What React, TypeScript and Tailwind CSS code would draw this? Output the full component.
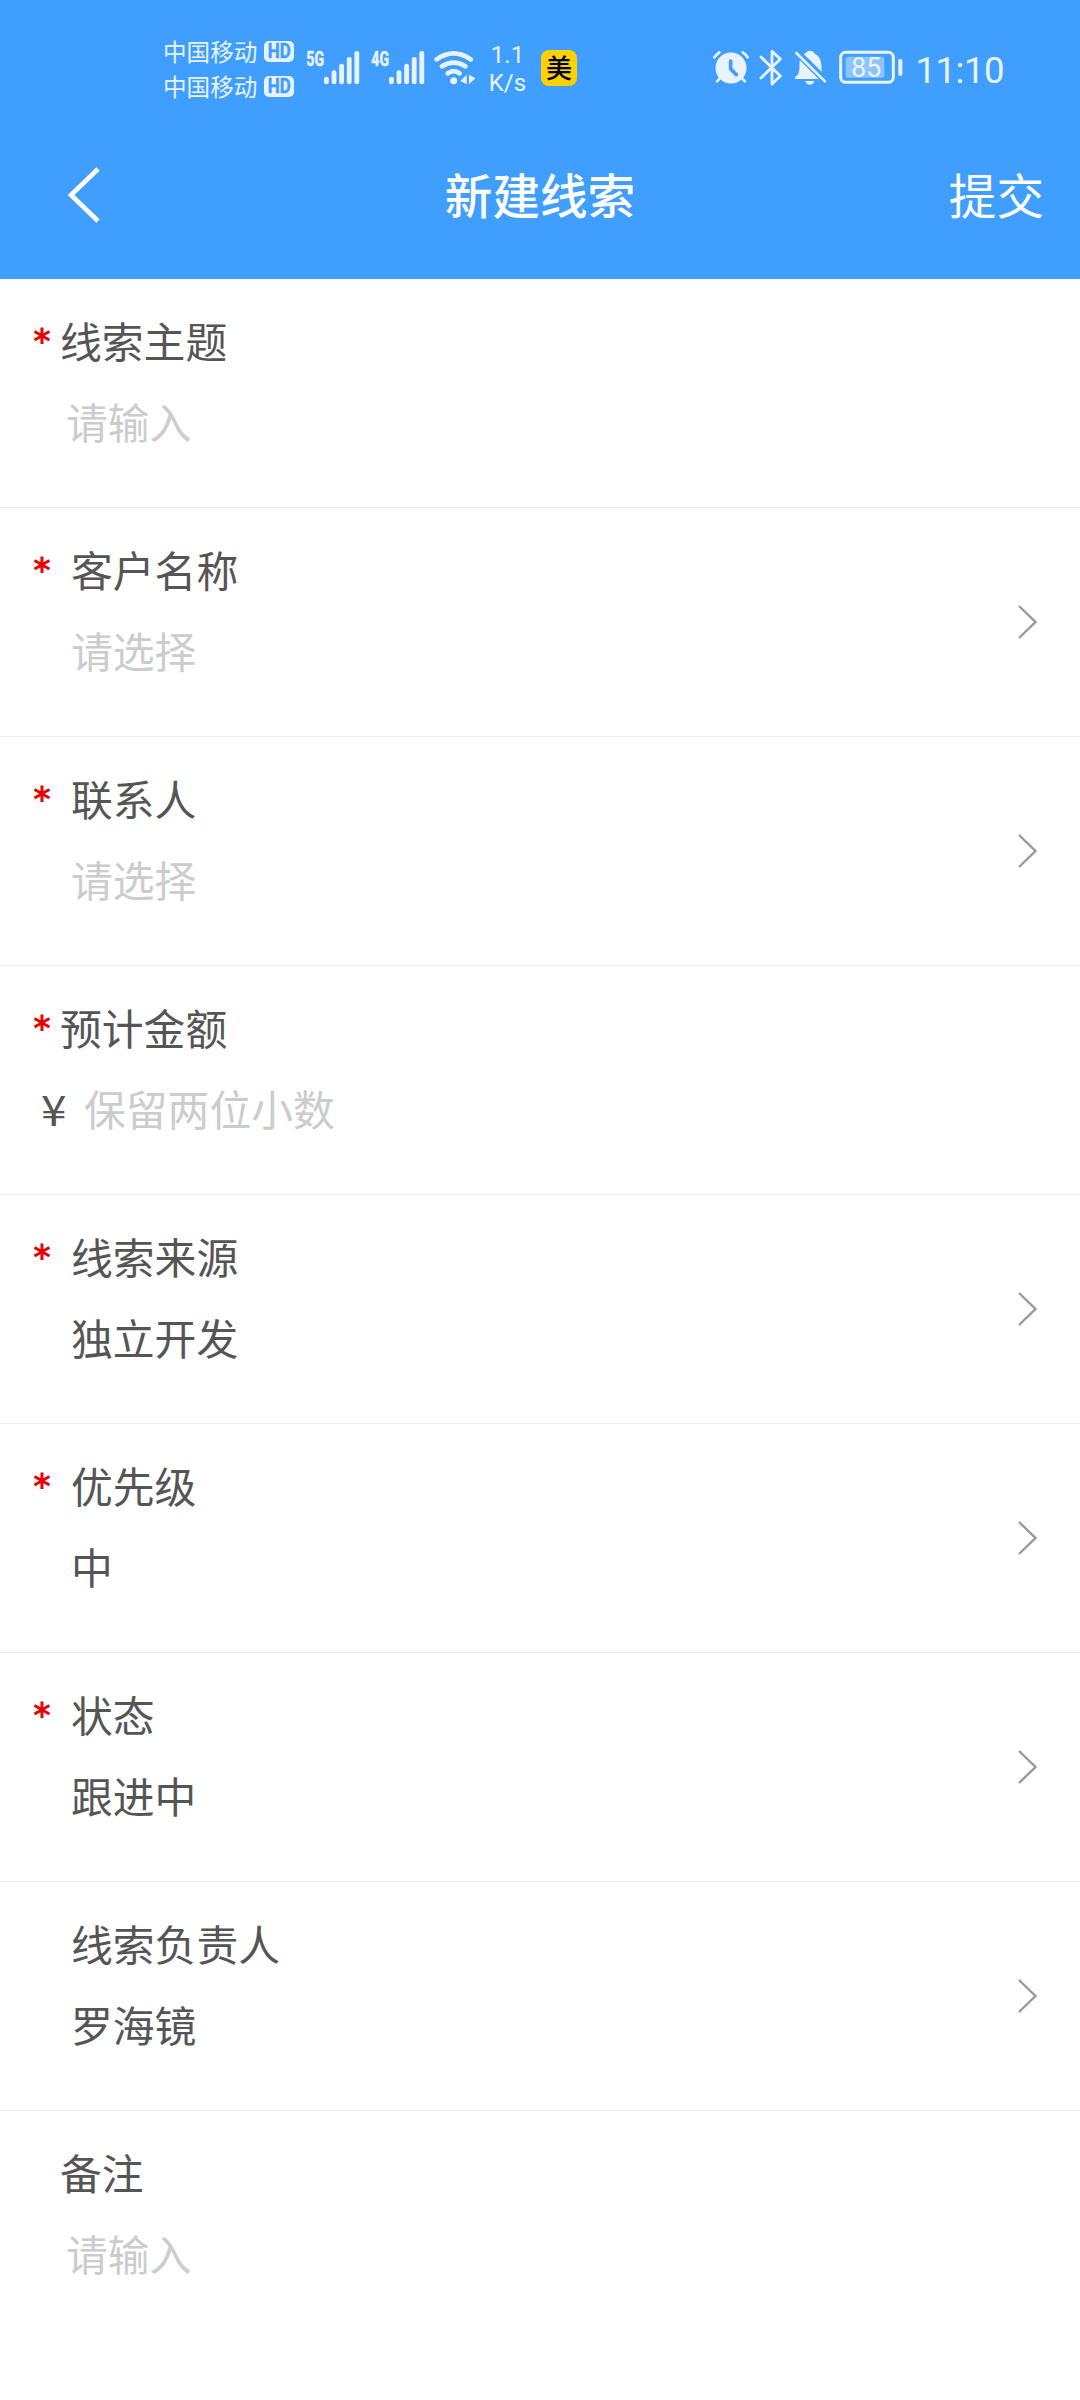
import React from "react";

type Row = {
  label: string;
  value: string;
  required?: boolean;
  select?: boolean;
  filled?: boolean;
  currency?: boolean;
};

const rows: Row[] = [
  { label: "线索主题", value: "请输入", required: true },
  { label: "客户名称", value: "请选择", required: true, select: true },
  { label: "联系人", value: "请选择", required: true, select: true },
  { label: "预计金额", value: "保留两位小数", required: true, currency: true },
  { label: "线索来源", value: "独立开发", required: true, select: true, filled: true },
  { label: "优先级", value: "中", required: true, select: true, filled: true },
  { label: "状态", value: "跟进中", required: true, select: true, filled: true },
  { label: "线索负责人", value: "罗海镜", select: true, filled: true },
  { label: "备注", value: "请输入" },
];

function Carrier() {
  return (
    <div className="flex h-[21px] items-center">
      <span className="w-[101px] text-[23.6px] leading-[21px] whitespace-nowrap">中国移动</span>
      <svg width="30" height="21" viewBox="0 0 30 21">
        <rect width="30" height="21" rx="5" fill="#e8f3ff" />
        <text x="3.800" y="17.400" textLength="23" lengthAdjust="spacingAndGlyphs" fontFamily="Roboto, sans-serif" fontWeight="700" fontSize="19.500" fill="#409eff" stroke="#409eff" strokeWidth="0.5">HD</text>
      </svg>
    </div>
  );
}

function Signal({ label }: { label: string }) {
  const tops = [155, 136, 116, 96, 78];
  return (
    <svg width="54" height="44" viewBox="468 63 162 132" className="shrink-0">
      <text x="469" y="122" textLength="53" lengthAdjust="spacingAndGlyphs" fontFamily="Roboto, sans-serif" fontWeight="700" fontSize="59" fill="#e8f3ff" stroke="#e8f3ff" strokeWidth="1.5">{label}</text>
      {tops.map((t, i) => (
        <rect key={t} x={522 + i * 22.8} y={t} width="14.5" height={178 - t} rx="7" fill="#e8f3ff" />
      ))}
    </svg>
  );
}

function Wifi() {
  return (
    <svg width="42" height="36" viewBox="192 75 126 108" className="shrink-0" fill="none" stroke="#e8f3ff" strokeWidth="14" strokeLinecap="round">
      <path d="M200 103Q251 67 302 103" />
      <path d="M216 124Q251 102 286 124" />
      <path d="M233 145Q251 132 269 145" />
      <circle cx="251" cy="167" r="10.5" fill="#e8f3ff" stroke="none" />
      <path d="M290 149V178L271 168ZM297 149L316 160L297 178Z" fill="#e8f3ff" stroke="none" />
    </svg>
  );
}

function Alarm() {
  return (
    <svg width="36" height="36" viewBox="38 64 108 108" className="shrink-0" fill="none" strokeLinecap="round">
      <circle cx="92" cy="118" r="46.5" fill="#e8f3ff" />
      <path d="M42 86Q49 77 57 71M127 71Q136 77 142 86M50 158L62 146M122 146L134 158" stroke="#e8f3ff" strokeWidth="8" />
      <path d="M91 97V121L108 138" stroke="#409eff" strokeWidth="11" strokeLinejoin="round" />
    </svg>
  );
}

function Bluetooth() {
  return (
    <svg width="24" height="38" viewBox="178 60 72 114" className="shrink-0" fill="none" stroke="#e8f3ff" strokeWidth="8.5" strokeLinecap="round" strokeLinejoin="round">
      <path d="M184 84L242 141L217 165V67L242 90L184 147" />
    </svg>
  );
}

function MutedBell() {
  return (
    <svg width="33" height="36" viewBox="283 64 99 108" className="shrink-0" fill="#e8f3ff">
      <path d="M300 94L357 151H286V145C296 139 299 132 299 118Z" />
      <path d="M312 76C319 75 321 66 331 66C341 66 342 73 348 77C362 86 366 98 366 129Z" />
      <path d="M317 157H344Q341 168 331 168Q320 168 317 157Z" />
      <path d="M290 73L376 158" stroke="#e8f3ff" strokeWidth="7.5" strokeLinecap="round" />
    </svg>
  );
}

function Battery() {
  return (
    <svg width="64" height="36" viewBox="416 64 192 108" className="shrink-0">
      <rect x="421" y="71" width="158" height="90" rx="15" fill="none" stroke="#e8f3ff" strokeWidth="9" />
      <rect x="436" y="84" width="116" height="63" rx="8" fill="#8cc4ff" />
      <rect x="594" y="90" width="12" height="52" rx="6" fill="#e8f3ff" />
      <text x="453" y="146" textLength="90" lengthAdjust="spacingAndGlyphs" fontFamily="Roboto, sans-serif" fontSize="81" fill="#e8f3ff">85</text>
    </svg>
  );
}

function StatusBar() {
  return (
    <div className="flex h-[136px] items-center pl-[163px] text-[#e8f3ff]">
      <div className="flex flex-col gap-[14px] pt-[2px]">
        <Carrier />
        <Carrier />
      </div>
      <div className="ml-[12px]"><Signal label="5G" /></div>
      <div className="ml-[10.5px]"><Signal label="4G" /></div>
      <div className="ml-[9.5px]"><Wifi /></div>
      <div className="mr-[12.5px] ml-[10.5px] flex w-[42px] flex-col items-center pt-[2px] font-[Roboto,sans-serif] text-[24px] leading-[28px]">
        <span>1.1</span>
        <span>K/s</span>
      </div>
      <div className="flex h-[36px] w-[36px] items-center justify-center rounded-[8px] bg-[#ffd100] text-[26px] leading-[30px] font-medium text-black">
        <span className="relative -top-px">美</span>
      </div>
      <div className="ml-[136px] flex items-center">
        <Alarm />
        <div className="ml-[10px]"><Bluetooth /></div>
        <div className="ml-[11px]"><MutedBell /></div>
        <div className="ml-[12px]"><Battery /></div>
        <svg width="96" height="48" viewBox="0 0 96 48" className="ml-[12px]">
          <text x="0.500" y="38.500" textLength="89" fontFamily="Roboto, sans-serif" fontSize="36.5" fill="#e8f3ff">11:10</text>
        </svg>
      </div>
    </div>
  );
}

function Field({ row }: { row: Row }) {
  const labelPad = row.select ? "pl-[71px]" : "pl-[60px]";
  const valuePad = row.currency ? "pl-[33px]" : row.select ? "pl-[71px]" : "pl-[66px]";
  return (
    <div className="flex h-[229px] items-center border-b border-[#eee] text-[#555] last:border-b-0">
      <div className="h-full grow pt-[40px]">
        <div className={"relative flex h-[42px] items-center text-[41.8px] leading-[42px] " + labelPad}>
          {row.required && (
            <span className="absolute top-px left-[33.5px] font-['DejaVu_Sans',sans-serif] text-[34px] text-[#e60000] [-webkit-text-stroke:1px_#e60000]">*</span>
          )}
          {row.label}
        </div>
        <div className={"mt-[39px] flex h-[42px] items-center text-[41.8px] leading-[42px] " + valuePad}>
          {row.currency && (
            <span className="flex w-[51px] pl-[8px]">
              <span className="origin-left scale-x-110">¥</span>
            </span>
          )}
          <span className={row.filled ? "" : "text-[#ccc]"}>{row.value}</span>
        </div>
      </div>
      {row.select && (
        <svg width="24" height="36" viewBox="0 0 24 36" className="mr-[40px]" fill="none" stroke="#999" strokeWidth="2.4">
          <path d="M3 2L19.500 18L3 34" />
        </svg>
      )}
    </div>
  );
}

export default function App() {
  return (
    <div className="h-[2400px] w-[1080px] overflow-hidden bg-white font-['Noto_Sans_CJK_SC',sans-serif]">
      <header className="h-[279px] bg-[#409eff]">
        <StatusBar />
        <div className="grid h-[118px] grid-cols-3 items-center text-[47.6px] leading-[48px] text-white">
          <svg width="36" height="56" viewBox="0 0 36 56" className="ml-[66px]" fill="none" stroke="white" strokeWidth="4.6">
            <path d="M32 2L5 28L32 54" />
          </svg>
          <h1 className="pb-[3px] text-center font-medium">新建线索</h1>
          <div className="pr-[36px] pb-[3px] text-right">提交</div>
        </div>
      </header>
      <main>
        {rows.map((row) => (
          <Field key={row.label} row={row} />
        ))}
      </main>
    </div>
  );
}
